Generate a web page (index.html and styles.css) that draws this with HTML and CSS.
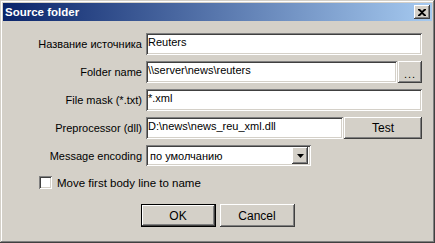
FILE: index.html
```html
<!DOCTYPE html>
<html lang="ru">
<head>
    <meta charset="UTF-8">
    <title>Source folder</title>
    <link rel="stylesheet" href="styles.css">
</head>
<body>

<div class="window">
    <div class="titlebar">
        <span class="title">Source folder</span>
        <button class="close-btn" type="button">
            <svg width="8" height="7" viewBox="0 0 8 7">
                <path d="M0 0h2l2 2 2-2h2v1l-3 2.5 3 2.5v1h-2l-2-2-2 2h-2v-1l3-2.5-3-2.5z" fill="#000"/>
            </svg>
        </button>
    </div>

    <form class="dialog-body">
        <div class="row">
            <label class="caption" for="srcName">Название источника</label>
            <input class="field" id="srcName" type="text" value="Reuters">
        </div>

        <div class="row">
            <label class="caption" for="folder">Folder name</label>
            <input class="field" id="folder" type="text" value="\\server\news\reuters">
            <button class="btn btn-browse" type="button">...</button>
        </div>

        <div class="row">
            <label class="caption" for="mask">File mask (*.txt)</label>
            <input class="field" id="mask" type="text" value="*.xml">
        </div>

        <div class="row">
            <label class="caption" for="prep">Preprocessor (dll)</label>
            <input class="field" id="prep" type="text" value="D:\news\news_reu_xml.dll">
            <button class="btn btn-test" type="button">Test</button>
        </div>

        <div class="row row-select">
            <label class="caption" for="enc">Message encoding</label>
            <div class="combo" id="enc">
                <span class="combo-text">по умолчанию</span>
                <span class="combo-arrow">
                    <svg width="7" height="4" viewBox="0 0 7 4"><path d="M0 0h7l-3.5 4z" fill="#000"/></svg>
                </span>
            </div>
        </div>

        <label class="check-row">
            <span class="checkbox"></span>
            <span>Move first body line to name</span>
        </label>

        <div class="actions">
            <button class="btn btn-default" type="button">OK</button>
            <button class="btn btn-action" type="button">Cancel</button>
        </div>
    </form>
</div>

</body>
</html>
```

FILE: styles.css
```css
body {
    margin: 0;
    font-family: "Liberation Sans", Arial, sans-serif;
    font-size: 11px;
    color: #000;
    background: #d4d0c8;
}

.window {
    width: 435px;
    height: 243px;
    box-sizing: border-box;
    padding: 3px;
    background: #d4d0c8;
    box-shadow:
        inset -1px -1px #404040,
        inset 1px 1px #d4d0c8,
        inset -2px -2px #808080,
        inset 2px 2px #fff;
}

.titlebar {
    height: 18px;
    display: flex;
    align-items: center;
    justify-content: space-between;
    padding: 0 2px;
    background: linear-gradient(to right, #0a246a, #a6caf0);
}

.title {
    color: #fff;
    font-weight: bold;
    font-size: 11.5px;
}

.close-btn {
    width: 16px;
    height: 14px;
    padding: 0;
    border: none;
    background: #d4d0c8;
    display: flex;
    align-items: center;
    justify-content: center;
    box-shadow:
        inset -1px -1px #404040,
        inset 1px 1px #fff,
        inset -2px -2px #808080;
}

.dialog-body {
    margin: 0;
    padding: 12px 10px 0 0;
    display: flex;
    flex-direction: column;
}

.row {
    display: flex;
    align-items: center;
    height: 22px;
    margin-bottom: 6px;
}

.caption {
    width: 139px;
    margin-right: 4px;
    text-align: right;
    flex-shrink: 0;
}

.field {
    flex: 1;
    min-width: 0;
    height: 22px;
    box-sizing: border-box;
    margin: 0;
    padding: 0 2px 4px 2px;
    border: none;
    outline: none;
    background: #fff;
    font: inherit;
    color: #000;
    box-shadow:
        inset 1px 1px #808080,
        inset -1px -1px #fff,
        inset 2px 2px #404040,
        inset -2px -2px #d4d0c8;
}

.btn {
    height: 22px;
    margin: 0;
    padding: 0;
    border: none;
    background: #d4d0c8;
    font: inherit;
    color: #000;
    box-shadow:
        inset -1px -1px #404040,
        inset 1px 1px #fff,
        inset -2px -2px #808080;
}

.btn-browse {
    width: 24px;
    margin-left: 1px;
    padding-top: 4px;
    letter-spacing: 1px;
}

.btn-test {
    width: 78px;
    margin-left: 1px;
    font-size: 12px;
}

.row-select {
    height: 21px;
    margin-top: 0;
    margin-bottom: 10px;
}

.combo {
    width: 165px;
    height: 21px;
    box-sizing: border-box;
    display: flex;
    align-items: center;
    justify-content: space-between;
    padding: 2px 3px 2px 4px;
    background: #fff;
    box-shadow:
        inset 1px 1px #808080,
        inset -1px -1px #fff,
        inset 2px 2px #404040,
        inset -2px -2px #d4d0c8;
}

.combo-arrow {
    width: 16px;
    height: 17px;
    display: flex;
    align-items: center;
    justify-content: center;
    background: #d4d0c8;
    box-shadow:
        inset -1px -1px #404040,
        inset 1px 1px #fff,
        inset -2px -2px #808080;
}

.check-row {
    display: flex;
    align-items: center;
    gap: 5px;
    padding-left: 36px;
    height: 13px;
    font-size: 11.5px;
}

.checkbox {
    width: 13px;
    height: 13px;
    box-sizing: border-box;
    background: #fff;
    box-shadow:
        inset 1px 1px #808080,
        inset -1px -1px #fff,
        inset 2px 2px #404040,
        inset -2px -2px #d4d0c8;
}

.actions {
    display: flex;
    justify-content: center;
    gap: 4px;
    margin-top: 15px;
    padding-left: 10px;
}

.actions .btn {
    width: 75px;
    height: 23px;
    font-size: 12px;
}

.btn-action {
    width: 76px;
}

.btn.btn-default {
    box-shadow:
        inset 0 0 0 1px #000,
        inset -2px -2px #404040,
        inset 2px 2px #fff,
        inset -3px -3px #808080;
}
```
